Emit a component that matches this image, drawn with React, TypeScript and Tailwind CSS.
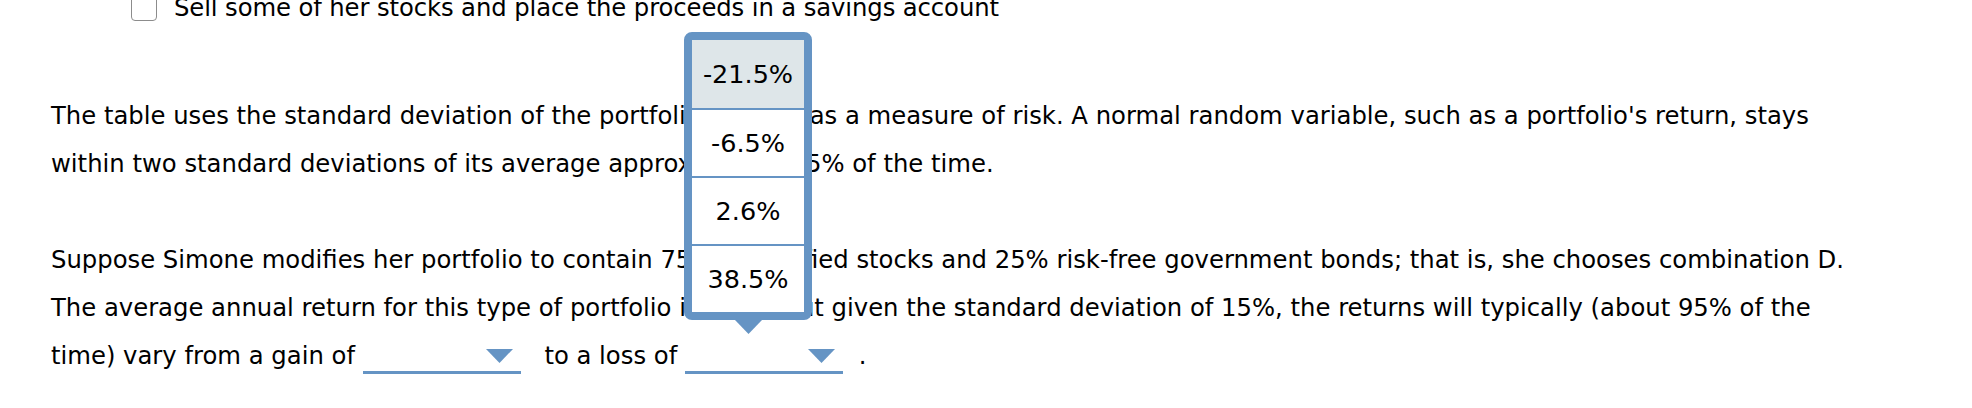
import React from 'react'

const BLUE = '#6594c4'

function Caret({ className }: { className?: string }) {
  return (
    <svg viewBox="0 0 27 14" className={className} aria-hidden>
      <polygon points="0,0 27,0 13.5,14" fill={BLUE} />
    </svg>
  )
}

function Blank({ className = '' }: { className?: string }) {
  return (
    <span className={`relative inline-block w-[158px] h-[30px] border-b-[3px] border-[#6594c4] align-[-10px] ${className}`}>
      <Caret className="absolute right-[8px] bottom-[8px] w-[27px] h-[14px]" />
    </span>
  )
}

const options = ['-21.5%', '-6.5%', '2.6%', '38.5%']

function Popup() {
  return (
    <div className="absolute left-[684px] top-[32px] w-[128px]">
      <div className="rounded-[8px] border-[8px] border-[#6594c4] bg-white overflow-hidden">
        {options.map((o, i) => (
          <div
            key={o}
            className={`h-[68px] flex items-center justify-center text-[25.5px] ${
              i === 0 ? 'bg-[#dee6e9]' : 'border-t-2 border-[#6594c4] bg-white'
            }`}
          >
            {o}
          </div>
        ))}
      </div>
      <div className="flex justify-center">
        <Caret className="w-[27px] h-[14px]" />
      </div>
    </div>
  )
}

export default function App() {
  return (
    <div className="relative w-[1972px] h-[408px] overflow-hidden bg-white text-black font-['DejaVu_Sans',Verdana,sans-serif] text-[24.3px] leading-[48px]">
      <div className="-mt-[16px] flex items-center pl-[131px]">
        <span className="w-[26px] h-[26px] rounded-[4px] border-[1.5px] border-[#8c8c8c] bg-white mr-[17px]" />
        <span className="whitespace-nowrap tracking-[-0.1px]">Sell some of her stocks and place the proceeds in a savings account</span>
      </div>

      <div className="pl-[51px] mt-[60px] whitespace-nowrap">
        <div>The table uses the standard deviation of the portfolio's return as a measure of risk. A normal random variable, such as a portfolio's return, stays</div>
        <div>within two standard deviations of its average approximately 95% of the time.</div>
      </div>

      <div className="pl-[51px] mt-[48px] whitespace-nowrap">
        <div>Suppose Simone modifies her portfolio to contain 75% diversified stocks and 25% risk-free government bonds; that is, she chooses combination D.</div>
        <div>The average annual return for this type of portfolio is 8.5%, but given the standard deviation of 15%, the returns will typically (about 95% of the</div>
        <div>
          time) vary from a gain of <Blank className="mr-[16px]" /> to a loss of <Blank className="mr-[8px]" /> .
        </div>
      </div>

      <Popup />
    </div>
  )
}
